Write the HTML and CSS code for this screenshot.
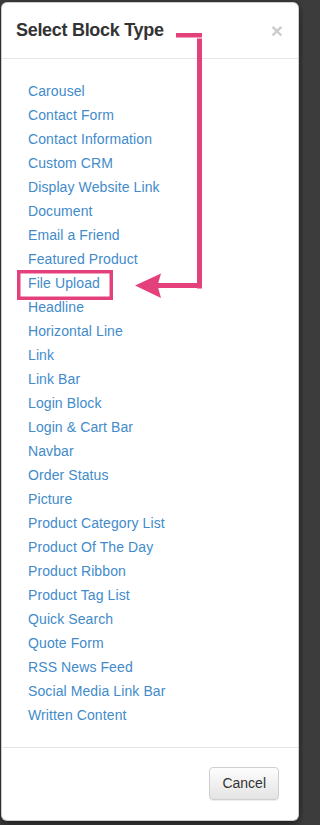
FILE: index.html
```html
<!DOCTYPE html>
<html lang="en">
<head>
<meta charset="utf-8">
<title>Select Block Type</title>
<link rel="stylesheet" href="styles.css">
</head>
<body>
<div class="page">
  <div class="modal">
    <div class="modal-header">
      <h4 class="modal-title">Select Block Type</h4>
      <span class="close">&times;</span>
    </div>
    <div class="modal-body">
      <ul class="block-list">
        <li><a href="#">Carousel</a></li>
        <li><a href="#">Contact Form</a></li>
        <li><a href="#">Contact Information</a></li>
        <li><a href="#">Custom CRM</a></li>
        <li><a href="#">Display Website Link</a></li>
        <li><a href="#">Document</a></li>
        <li><a href="#">Email a Friend</a></li>
        <li><a href="#">Featured Product</a></li>
        <li><a href="#">File Upload</a></li>
        <li><a href="#">Headline</a></li>
        <li><a href="#">Horizontal Line</a></li>
        <li><a href="#">Link</a></li>
        <li><a href="#">Link Bar</a></li>
        <li><a href="#">Login Block</a></li>
        <li><a href="#">Login &amp; Cart Bar</a></li>
        <li><a href="#">Navbar</a></li>
        <li><a href="#">Order Status</a></li>
        <li><a href="#">Picture</a></li>
        <li><a href="#">Product Category List</a></li>
        <li><a href="#">Product Of The Day</a></li>
        <li><a href="#">Product Ribbon</a></li>
        <li><a href="#">Product Tag List</a></li>
        <li><a href="#">Quick Search</a></li>
        <li><a href="#">Quote Form</a></li>
        <li><a href="#">RSS News Feed</a></li>
        <li><a href="#">Social Media Link Bar</a></li>
        <li><a href="#">Written Content</a></li>
      </ul>
    </div>
    <div class="modal-footer">
      <button class="btn" type="button">Cancel</button>
    </div>
  </div>
  <svg class="annotation" width="303" height="825" viewBox="0 0 303 825" aria-hidden="true">
    <rect x="18.75" y="271.75" width="92.5" height="26.5" fill="none" stroke="#e4407b" stroke-width="3.5"/>
    <rect x="176" y="33" width="26" height="4.5" fill="#e4407b"/>
    <rect x="197" y="38.5" width="5" height="250" fill="#e4407b"/>
    <rect x="157" y="283" width="45" height="5" fill="#e4407b"/>
    <polygon points="135,285.5 161,273.5 157.5,285.5 161,298" fill="#e4407b"/>
  </svg>
</div>
</body>
</html>
```

FILE: styles.css
```css
html, body {
  margin: 0;
  padding: 0;
}

body {
  background: #3c3c3c;
  font-family: "Liberation Sans", Arial, Helvetica, sans-serif;
  color: #333;
}

.page {
  position: relative;
  width: 303px;
  height: 825px;
  padding-top: 2px;
  box-sizing: border-box;
  overflow: hidden;
}

.modal {
  margin-left: 1px;
  width: 298px;
  box-sizing: border-box;
  background: #fff;
  border: 1px solid rgba(0, 0, 0, 0.2);
  border-radius: 6px;
  box-shadow: 0 3px 9px rgba(0, 0, 0, 0.5);
}

.modal-header {
  display: flex;
  align-items: flex-start;
  justify-content: space-between;
  padding: 15px 15px 15px 14px;
  border-bottom: 1px solid #e5e5e5;
}

.modal-title {
  margin: 0;
  font-size: 18px;
  line-height: 25px;
  font-weight: bold;
  letter-spacing: -0.3px;
  color: #333;
}

.close {
  font-size: 21px;
  font-weight: bold;
  line-height: 25px;
  color: #000;
  opacity: 0.2;
}

.modal-body {
  padding: 20px 20px 20px 26px;
}

.block-list {
  list-style: none;
  margin: 0;
  padding: 0;
}

.block-list li {
  height: 24px;
  line-height: 24px;
  font-size: 14px;
}

.block-list a {
  color: #428bca;
  text-decoration: none;
  letter-spacing: 0.1px;
}

.modal-footer {
  display: flex;
  justify-content: flex-end;
  padding: 19px 19px 20px 20px;
  border-top: 1px solid #e5e5e5;
}

.btn {
  font-family: "Liberation Sans", Arial, Helvetica, sans-serif;
  font-size: 14px;
  line-height: 19px;
  padding: 6px 12px;
  color: #333;
  background: linear-gradient(to bottom, #fdfdfd 0%, #e4e4e4 100%);
  border: 1px solid #cfcfcf;
  border-radius: 4px;
  box-shadow: inset 0 1px 0 rgba(255, 255, 255, 0.15), 0 1px 1px rgba(0, 0, 0, 0.075);
}

.annotation {
  position: absolute;
  top: 0;
  left: 0;
  pointer-events: none;
}
```
